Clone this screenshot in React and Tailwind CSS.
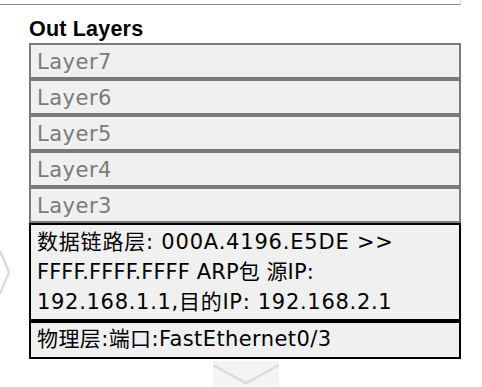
const layers = ["Layer7", "Layer6", "Layer5", "Layer4", "Layer3"];

const App = () => {
  return (
    <div className="relative w-[482px] h-[387px] bg-white overflow-hidden font-['DejaVu_Sans','Noto_Sans_CJK_SC',sans-serif]">
      <div className="h-[5px] w-[461px] border-b-[1.5px] border-r border-b-[#8a8a8a] border-r-[#d8d8d8]" />

      <svg
        className="absolute left-0 top-[250px]"
        width="12"
        height="46"
        viewBox="0 0 12 46"
      >
        <polyline
          points="0,1 9,22 0,44"
          fill="none"
          stroke="#dcdcdc"
          strokeWidth="2.5"
        />
      </svg>

      <div className="ml-[29px] mt-[12px] w-[432px] flex flex-col">
        <div className="font-['Liberation_Sans',sans-serif] font-bold text-[21.5px] leading-[24px] tracking-[0.2px] text-black mb-[2px]">
          Out Layers
        </div>

        {layers.map((name) => (
          <div
            key={name}
            className="h-[36px] border-2 border-[#7a7a7a] bg-[#f0f0f0] pl-[6px] pt-[2px] text-[21px] leading-[30px] tracking-[0.5px] text-[#7a7a7a]"
          >
            {name}
          </div>
        ))}

        <div className="h-[98px] border-2 border-black bg-[#f0f0f0] pl-[6px] pt-[2px] text-[21px] leading-[30px] text-black whitespace-nowrap">
          <div className="tracking-[0.8px]">数据链路层: 000A.4196.E5DE &gt;&gt;</div>
          <div className="tracking-[0.1px]">FFFF.FFFF.FFFF ARP包 源IP:</div>
          <div className="tracking-[0.7px]">192.168.1.1,目的IP: 192.168.2.1</div>
        </div>

        <div className="h-[38px] border-2 border-black bg-[#f0f0f0] pl-[6px] pt-[1px] text-[21px] leading-[30px] tracking-[0.4px] text-black whitespace-nowrap">
          物理层:端口:FastEthernet0/3
        </div>

        <div className="ml-[184px] mt-[2px] w-[66px] h-[26px] bg-[#f4f4f4]">
          <svg width="66" height="26" viewBox="0 0 66 26">
            <polyline
              points="0,4 33,22 66,4"
              fill="none"
              stroke="#dcdcdc"
              strokeWidth="2.5"
            />
          </svg>
        </div>
      </div>
    </div>
  );
};

export default App;
